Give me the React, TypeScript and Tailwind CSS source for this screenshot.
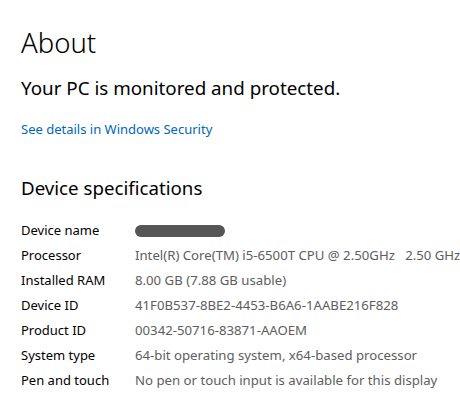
const specs: [string, string][] = [
  ["Processor", "Intel(R) Core(TM) i5-6500T CPU @ 2.50GHz   2.50 GHz"],
  ["Installed RAM", "8.00 GB (7.88 GB usable)"],
  ["Device ID", "41F0B537-8BE2-4453-B6A6-1AABE216F828"],
  ["Product ID", "00342-50716-83871-AAOEM"],
  ["System type", "64-bit operating system, x64-based processor"],
  ["Pen and touch", "No pen or touch input is available for this display"],
];

export default function App() {
  return (
    <div
      className="w-[460px] h-[393px] overflow-hidden bg-white text-black pl-[21px] flex flex-col"
      style={{ fontFamily: '"Noto Sans", "Open Sans", sans-serif' }}
    >
      <h1 className="mt-[23px] h-[40px] leading-[40px] text-[27.5px] font-light">About</h1>
      <p className="mt-[5px] h-[40px] leading-[40px] text-[18.8px]">Your PC is monitored and protected.</p>
      <a className="mt-[9px] h-[24px] leading-[24px] text-[13px] text-[#0067b8] whitespace-nowrap">
        See details in Windows Security
      </a>
      <h2 className="mt-[29px] h-[36px] leading-[36px] text-[18.7px]">Device specifications</h2>
      <div className="mt-[12px] flex flex-col">
        <div className="flex h-[25px] items-center text-[13px]">
          <span className="w-[114px] shrink-0">Device name</span>
          <span className="h-[12px] w-[90px] rounded-full bg-[#555]"></span>
        </div>
        {specs.map(([k, v]) => (
          <div key={k} className="flex h-[25px] items-center text-[13px] whitespace-pre">
            <span className="w-[114px] shrink-0">{k}</span>
            <span className="text-[#5d5d5d] text-[13.2px]">{v}</span>
          </div>
        ))}
      </div>
    </div>
  );
}
